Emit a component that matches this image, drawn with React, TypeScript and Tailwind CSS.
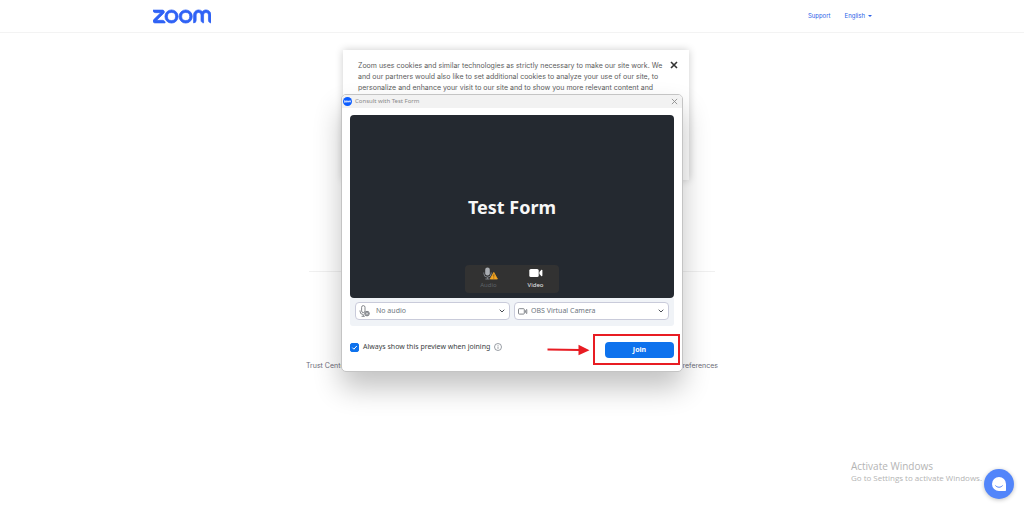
import { useState } from 'react';
import type { ReactNode } from 'react';
import { SiZoom } from 'react-icons/si';

const ZoomBadge = () => (
  <span className="flex size-[9px] shrink-0 items-center justify-center rounded-full bg-[#0b5cff] text-white">
    <SiZoom viewBox="0 9 24 6" strokeWidth={1} className="h-[3px] w-[7px]" aria-hidden />
  </span>
);

const CloseIcon = ({ className }: { className: string }) => (
  <svg viewBox="0 0 8 8" className={className} fill="none" stroke="currentColor" aria-hidden>
    <path d="M1 1l6 6M7 1L1 7" />
  </svg>
);

const MicWarningIcon = () => (
  <svg viewBox="0 0 15 13" className="ml-[3px] h-[13px] w-[15px]" aria-hidden>
    <rect x="2.2" y="0.4" width="4.6" height="8.2" rx="2.3" fill="#a9adb2" />
    <path d="M0.8 5.5v1a3.7 3.7 0 0 0 7.4 0v-1M4.5 10.2v1.8M2.4 12h4.2" fill="none" stroke="#7d8187" />
    <path d="M10.8 5.4l3.6 6.6H7.2z" fill="#f5a623" stroke="#f5a623" strokeWidth="0.8" strokeLinejoin="round" />
    <path d="M10.8 7.4v2.3M10.8 10.5v1" stroke="#6b4a12" strokeWidth="0.8" />
  </svg>
);

const VideoIcon = () => (
  <svg viewBox="0 0 14 8" className="h-2 w-[14px]" fill="#fff" aria-hidden>
    <rect x="0.3" y="0" width="9.4" height="8" rx="1.6" />
    <path d="M10.4 3l1.8-2c.5-.5 1.2-.2 1.2.5v5c0 .7-.7 1-1.2.5l-1.8-2z" />
  </svg>
);

const MicOffIcon = () => (
  <svg viewBox="0 0 11 12" className="h-3 w-[11px]" fill="none" stroke="#777a80" strokeWidth="0.9" aria-hidden>
    <rect x="2.6" y="0.6" width="3.4" height="7" rx="1.7" />
    <path d="M1 5.4v.8a3.3 3.3 0 0 0 3.3 3.3M4.3 9.5v1.8M2.6 11.3h3.2" />
    <circle cx="8" cy="8.6" r="2.3" fill="#8f9297" />
    <path d="M7 7.6l2 2M9 7.6l-2 2" stroke="#fff" strokeWidth="0.6" />
  </svg>
);

const CameraIcon = () => (
  <svg viewBox="0 0 10 7" className="h-[7px] w-[10px]" fill="none" stroke="#777a80" strokeWidth="0.9" aria-hidden>
    <rect x="0.5" y="0.7" width="5.8" height="5.4" rx="0.8" />
    <path d="M7.6 2.5l1.2-1v4l-1.2-1z" />
  </svg>
);

const InfoIcon = () => (
  <svg viewBox="0 0 8 8" className="size-2" fill="none" stroke="#6e7680" strokeWidth="0.7" aria-hidden>
    <circle cx="4" cy="4" r="3.5" />
    <path d="M4 3.5v2.4M4 2v.8" />
  </svg>
);

type DeviceSelectProps = { label: string; option: string; icon: ReactNode; padding: string };

const DeviceSelect = ({ label, option, icon, padding }: DeviceSelectProps) => (
  <div className="relative h-[18px] flex-1">
    <select
      aria-label={label}
      className={`block h-[18px] w-full appearance-none rounded-[4px] border border-[#c9cbda] bg-white pr-4 text-[7px] leading-[10px] text-[#6e7680] ${padding}`}
    >
      <option>{option}</option>
    </select>
    <span className="pointer-events-none absolute inset-y-0 left-1 flex items-center">{icon}</span>
    <svg
      viewBox="0 0 6 4"
      className="pointer-events-none absolute right-[5px] top-[7px] h-1 w-[6px]"
      fill="none"
      stroke="#4b4f56"
      aria-hidden
    >
      <path d="M0.7 0.7L3 3l2.3-2.3" />
    </svg>
  </div>
);

const Header = () => (
  <header className="border-b border-[#f3f3f3]">
    <div className="mx-auto flex h-8 max-w-[720px] items-center justify-between">
      <a href="#home" aria-label="Zoom" className="px-[1px] text-[#2f62f5]">
        <SiZoom viewBox="0 9 24 6" strokeWidth={0.3} className="h-[15px] w-[58px]" />
      </a>
      <nav className="flex items-center gap-[14px] text-[6px] leading-[10px] text-[#2b61e8]">
        <a href="#support">Support</a>
        <button type="button" className="flex items-center gap-[3px]">
          English
          <span className="h-0 w-0 border-x-2 border-t-2 border-x-transparent border-t-current" />
        </button>
      </nav>
    </div>
  </header>
);

const CookieNotice = () => (
  <section
    aria-label="Cookies"
    className="absolute left-1/2 top-[50px] ml-1 flex min-h-[130px] w-[346px] -translate-x-1/2 items-start justify-between bg-white py-[10px] pl-[15px] pr-[11px] shadow-[0_0_8px_rgba(0,0,0,0.2)]"
  >
    <p className="whitespace-nowrap text-[7px] leading-[11px] text-[#5c5c5c]">
      Zoom uses cookies and similar technologies as strictly necessary to make our site work. We
      <br />
      and our partners would also like to set additional cookies to analyze your use of our site, to
      <br />
      personalize and enhance your visit to our site and to show you more relevant content and
    </p>
    <button type="button" aria-label="Close cookie notice" className="pt-[1px] text-[#333]">
      <CloseIcon className="size-2 stroke-[1.6]" />
    </button>
  </section>
);

const PreviewDialog = () => {
  const [showPreview, setShowPreview] = useState(true);

  return (
    <section
      role="dialog"
      aria-label="Consult with Test Form"
      className="absolute left-1/2 top-[94px] w-[342px] -translate-x-1/2 rounded-[5px] border border-[#c4c4c4] bg-white font-['Noto_Sans','Open_Sans',sans-serif] shadow-[0_16px_28px_rgba(0,0,0,0.24)]"
    >
      <div className="flex h-[13px] items-center justify-between rounded-t-[4px] bg-[#f2f2f2] pl-[1px] pr-1">
        <div className="flex items-center gap-[3px] text-[6px] leading-[9px] text-[#8a8a8a]">
          <ZoomBadge />
          Consult with Test Form
        </div>
        <button type="button" aria-label="Close" className="text-[#8a8a8a]">
          <CloseIcon className="size-[7px] stroke-[1]" />
        </button>
      </div>

      <div className="px-2 pt-[7px]">
        <div className="relative flex h-[183px] items-center justify-center rounded-[4px] bg-[#242930]">
          <h1 className="text-[18px] font-bold leading-6 text-[#f7f7f7]">Test Form</h1>
          <div className="absolute bottom-[5px] left-1/2 flex h-7 w-[94px] -translate-x-1/2 rounded-[4px] bg-[#323232] text-[6px] leading-[9px]">
            <button type="button" className="flex flex-1 flex-col items-center justify-between pb-[3px] pt-[2px] text-[#5f6368]">
              <MicWarningIcon />
              Audio
            </button>
            <button type="button" className="flex flex-1 flex-col items-center justify-between pb-[3px] pt-1 text-[#e8e8e8]">
              <VideoIcon />
              Video
            </button>
          </div>
        </div>
        <div className="flex h-7 gap-1 rounded-b-[3px] bg-[#f0f3f7] px-[5px] pt-1">
          <DeviceSelect label="Microphone" option="No audio" icon={<MicOffIcon />} padding="pl-5" />
          <DeviceSelect label="Camera" option="OBS Virtual Camera" icon={<CameraIcon />} padding="pl-4" />
        </div>
      </div>

      <div className="flex items-start justify-between px-2 pb-[13px] pt-4">
        <div className="flex items-center gap-1">
          <label className="flex items-center gap-1 text-[7px] leading-[10px] text-[#3a3d42]">
            <span className="relative flex size-[9px]">
              <input
                type="checkbox"
                checked={showPreview}
                onChange={(e) => setShowPreview(e.target.checked)}
                className="size-[9px] appearance-none rounded-[2px] border border-[#0e72ed] checked:bg-[#0e72ed]"
              />
              {showPreview && (
                <svg viewBox="0 0 9 9" className="pointer-events-none absolute inset-0" fill="none" stroke="#fff" aria-hidden>
                  <path d="M2.3 4.6l1.6 1.6 2.9-3.2" />
                </svg>
              )}
            </span>
            Always show this preview when joining
          </label>
          <InfoIcon />
        </div>
        <div className="relative">
          <button type="button" className="block h-4 w-[69px] rounded-[4px] bg-[#0e72ed] text-[7px] font-bold leading-[10px] text-white">
            Join
          </button>
          <span className="pointer-events-none absolute -bottom-[7px] -left-3 -right-[6px] -top-2 border-2 border-[#e81c23]" />
          <svg viewBox="0 0 43 12" className="pointer-events-none absolute -left-[58px] top-[2px] h-3 w-[43px]" aria-hidden>
            <path d="M0.5 5.6L33 6" stroke="#e81c23" strokeWidth="2" />
            <path d="M31.5 0.8L42.5 6.2l-11 5z" fill="#e81c23" />
          </svg>
        </div>
      </div>
    </section>
  );
};

const App = () => (
  <div className="relative flex min-h-screen flex-col bg-white font-['Inter','Liberation_Sans',sans-serif]">
    <Header />
    <footer className="mx-auto w-full max-w-[412px] pt-[238px] text-[7px] leading-[10px] text-[#6b6b78]">
      <hr className="mx-[3px] border-[#f0f0f0]" />
      <div className="flex justify-between pt-[89px]">
        <a href="#trust">Trust Center</a>
        <a href="#cookies">Cookie Preferences</a>
      </div>
    </footer>

    <CookieNotice />
    <PreviewDialog />

    <div className="absolute bottom-[9px] right-[10px] flex items-end gap-[2px] font-['Open_Sans',sans-serif] text-[#b4b4b4]">
      <div className="pb-4">
        <p className="text-[10px] leading-[14px]">Activate Windows</p>
        <p className="text-[8px] leading-[10px]">Go to Settings to activate Windows.</p>
      </div>
      <button
        type="button"
        aria-label="Chat"
        className="flex size-[30px] items-center justify-center rounded-full bg-[#5285fa] shadow-[0_1px_4px_rgba(0,0,0,0.25)]"
      >
        <svg viewBox="0 0 14 14" className="size-[14px]" aria-hidden>
          <path d="M7 0a7 7 0 0 1 7 7v6.2a.8.8 0 0 1-.8.8H7A7 7 0 0 1 7 0z" fill="#fff" />
          <path d="M3.6 8.8c1.9 2 4.9 2 6.8 0" fill="none" stroke="#5285fa" strokeLinecap="round" />
        </svg>
      </button>
    </div>
  </div>
);

export default App;
